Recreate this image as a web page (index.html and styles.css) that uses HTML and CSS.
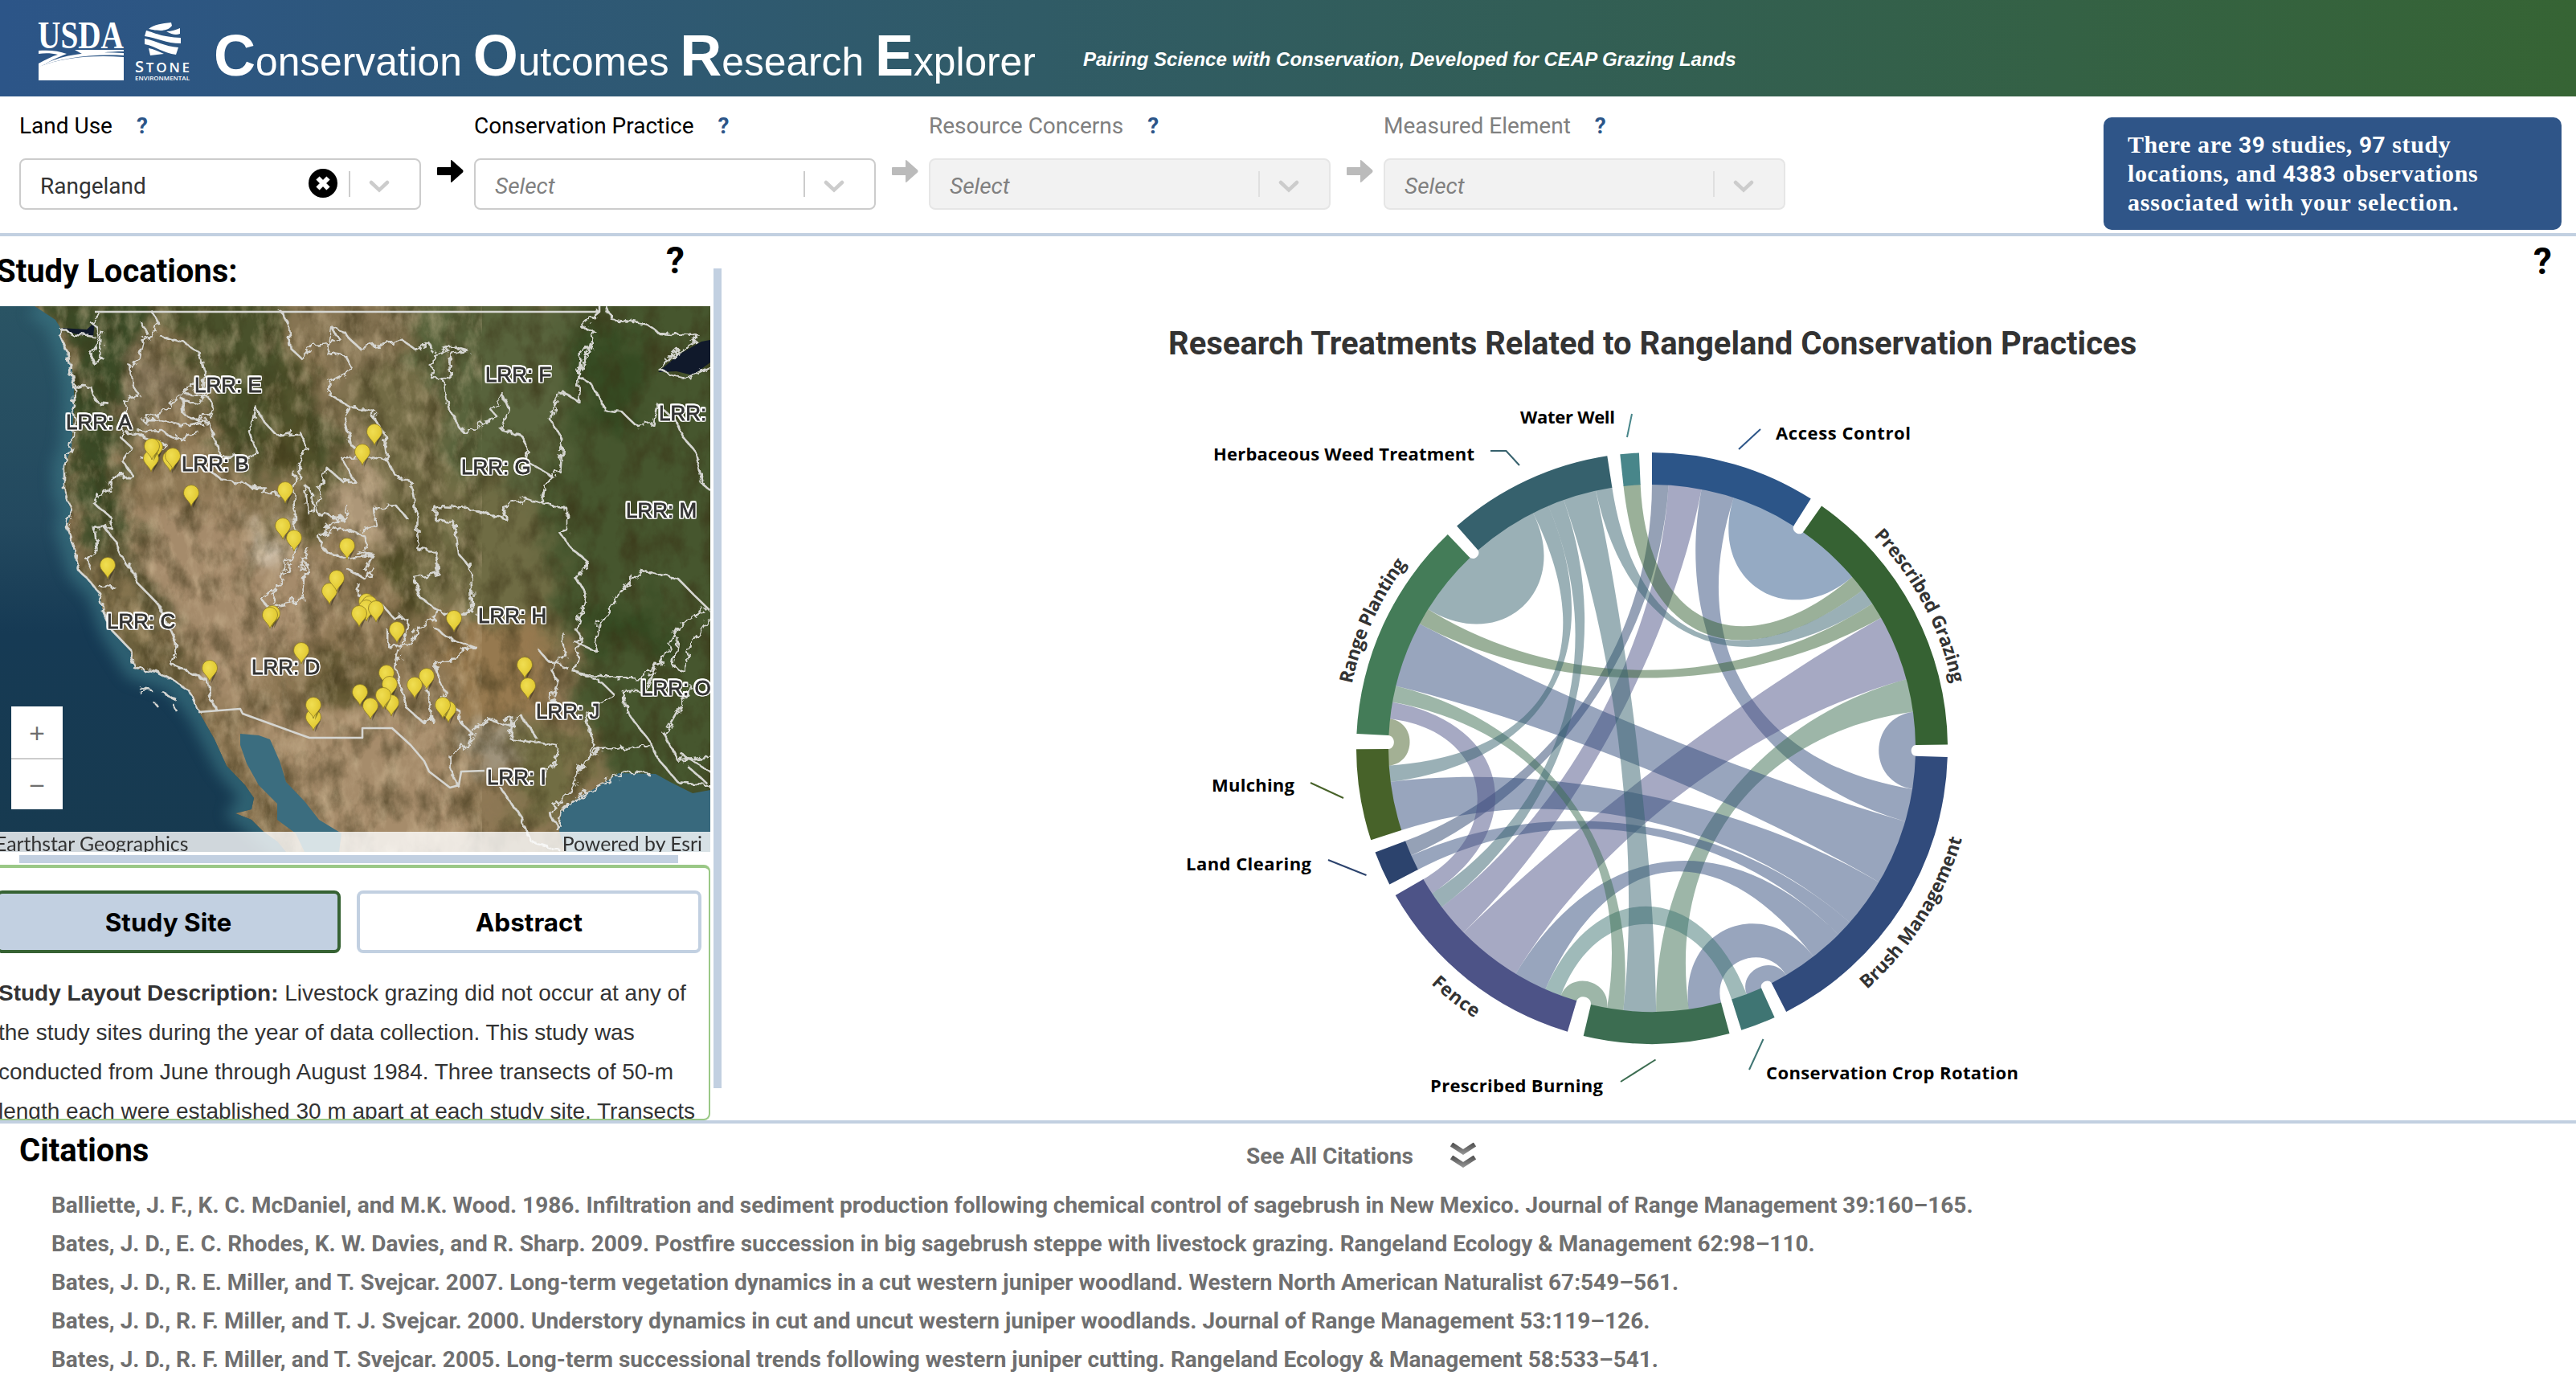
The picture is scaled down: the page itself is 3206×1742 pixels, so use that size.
FILE: index.html
```html
<!DOCTYPE html>
<html lang="en">
<head>
<meta charset="utf-8">
<title>Conservation Outcomes Research Explorer</title>
<link rel="stylesheet" href="styles.css">
</head>
<body>
<header class="topbar">
  <svg class="logo-usda" viewBox="0 0 108 74" width="108" height="74" aria-label="USDA">
    <text x="0" y="34" textLength="107" lengthAdjust="spacingAndGlyphs" class="usda-text">USDA</text>
    <path fill="#fff" d="M1 37C14 36 26 37 36 41C26 45 14 50 1 58V53C10 48 18 44 25 42C17 40 9 40 1 41Z"/>
    <path fill="#fff" d="M46 36H107V38C88 38 72 40 60 44C55 41 50 38 46 36ZM1 57C28 42 62 37 107 40V43C62 41 28 47 1 57Z"/>
    <path fill="#fff" d="M1 74V57C30 46 66 42 107 45V74Z"/>
  </svg>
  <svg class="logo-stone" viewBox="0 0 70 74" width="70" height="74" aria-label="Stone Environmental">
    <path fill="#fff" d="M18 10C24 5 34 3 46 2L47 6C44 10 40 11 35 12C29 12 22 11 18 10ZM40 13C47 13 52 11 57 9V16C52 18 47 17 40 13ZM15 12C26 15 34 20 58 21V28C40 28 28 21 13 19ZM13 22C28 25 38 32 55 33L52 42C36 40 28 32 13 29ZM18 34C24 35 30 38 37 41L20 43Z"/>
    <text x="1" y="64" class="stone-s" textLength="68" lengthAdjust="spacing"><tspan class="stone-cap">S</tspan>TONE</text>
    <text x="1" y="74" class="stone-env" textLength="68" lengthAdjust="spacingAndGlyphs">ENVIRONMENTAL</text>
  </svg>
  <h1 class="brand"><b>C</b>onservation <b>O</b>utcomes <b>R</b>esearch <b>E</b>xplorer</h1>
  <p class="tagline">Pairing Science with Conservation, Developed for CEAP Grazing Lands</p>
</header>

<svg class="defs" width="0" height="0">
  <symbol id="arrow" viewBox="0 0 33 28"><path d="M1 9H17V1Q17-1 19 1L32 12.500Q33 14 32 15.500L19 27Q17 29 17 27V19H1Q0 19 0 18V10Q0 9 1 9Z"/></symbol>
  <symbol id="chev" viewBox="0 0 26 16"><path d="M3 3L13 12.500L23 3" fill="none" stroke="#ccc" stroke-width="4.500" stroke-linecap="round"/></symbol>
</svg>

<section class="filters">
  <div class="field">
    <div class="field-label">Land Use <span class="hint">?</span></div>
    <div class="select"><span class="value">Rangeland</span>
      <svg class="clear" viewBox="0 0 36 36" width="36" height="36"><circle cx="18" cy="18" r="18"/><path d="M11.500 11.500L24.500 24.500M24.500 11.500L11.500 24.500" stroke="#fff" stroke-width="6"/></svg>
      <i class="sep"></i><svg class="chev"><use href="#chev"/></svg></div>
  </div>
  <svg class="arrow"><use href="#arrow"/></svg>
  <div class="field">
    <div class="field-label">Conservation Practice <span class="hint">?</span></div>
    <div class="select"><span class="placeholder">Select</span><i class="sep"></i><svg class="chev"><use href="#chev"/></svg></div>
  </div>
  <svg class="arrow dim"><use href="#arrow"/></svg>
  <div class="field off">
    <div class="field-label">Resource Concerns <span class="hint">?</span></div>
    <div class="select"><span class="placeholder">Select</span><i class="sep"></i><svg class="chev"><use href="#chev"/></svg></div>
  </div>
  <svg class="arrow dim"><use href="#arrow"/></svg>
  <div class="field off">
    <div class="field-label">Measured Element <span class="hint">?</span></div>
    <div class="select"><span class="placeholder">Select</span><i class="sep"></i><svg class="chev"><use href="#chev"/></svg></div>
  </div>
  <p class="summary">There are <b>39</b> studies, <b>97</b> study<br>locations, and <b>4383</b> observations<br><span class="last">associated with your selection.</span></p>
</section>

<main class="workspace">
  <aside class="side">
    <div class="side-head"><h2>Study Locations:</h2><span class="help">?</span></div>
    <div class="map">
      <svg class="map-canvas" viewBox="0 0 884 679" width="884" height="679">
        <defs>
          <linearGradient id="sea" x1="0" y1="0" x2="0" y2="1"><stop offset="0" stop-color="#2a5464"/><stop offset=".4" stop-color="#23495f"/><stop offset=".6" stop-color="#163a54"/><stop offset="1" stop-color="#173a50"/></linearGradient>
          <filter id="soft" x="-30%" y="-30%" width="160%" height="160%" color-interpolation-filters="sRGB"><feGaussianBlur stdDeviation="12" result="b"/><feTurbulence type="fractalNoise" baseFrequency=".02" numOctaves="4" seed="3"/><feDisplacementMap in="b" scale="70" xChannelSelector="R" yChannelSelector="G"/></filter>
          <filter id="shelf" x="-30%" y="-30%" width="160%" height="160%" color-interpolation-filters="sRGB"><feGaussianBlur stdDeviation="9"/></filter>
          <filter id="grain" x="0" y="0" width="100%" height="100%" color-interpolation-filters="sRGB"><feTurbulence type="fractalNoise" baseFrequency=".04 .025" numOctaves="6" seed="8"/><feColorMatrix values="0 0 0 0 .22  0 0 0 0 .19  0 0 0 0 .08  2 0 0 0 -.82"/></filter>
          <filter id="grain2" x="0" y="0" width="100%" height="100%" color-interpolation-filters="sRGB"><feTurbulence type="fractalNoise" baseFrequency=".06 .03" numOctaves="6" seed="21"/><feColorMatrix values="0 0 0 0 .86  0 0 0 0 .78  0 0 0 0 .64  2.200 0 0 0 -.95"/></filter>
          <filter id="jag" x="-5%" y="-5%" width="110%" height="110%"><feTurbulence type="fractalNoise" baseFrequency=".09" numOctaves="3" seed="4"/><feDisplacementMap in="SourceGraphic" scale="13"/></filter>
          <radialGradient id="pinfill" cx=".4" cy=".35"><stop offset="0" stop-color="#f0de52"/><stop offset="1" stop-color="#e3cb35"/></radialGradient>
          <symbol id="pin" viewBox="-12 -12 26 32" overflow="visible"><path d="M2 17L9 3L5-6Z" fill="#000" opacity=".35"/><path d="M0 15C-2 8-9.500 5-9.500-2A9.500 9.500 0 0 1 9.500-2C9.500 5 2 8 0 15Z" fill="url(#pinfill)" stroke="#8b7a25" stroke-width=".8"/></symbol>
        </defs>
        <rect width="884" height="679" fill="#8e7855"/>
        <g filter="url(#soft)">
          <path fill="#3a4a26" d="M40 -20H190L175 90L155 110L148 190L150 290L130 330L110 300L85 200L90 60Z"/>
          <path fill="#49512b" d="M190 -20H345L365 80L410 130L420 170L395 290L370 250L350 180L320 230L275 190L262 130L250 60L215 40Z"/>
          <path fill="#86765a" d="M175 60L225 50L250 80L240 130L170 150L155 120Z"/>
          <path fill="#857453" d="M355 -20H500L500 120L440 170L400 100Z"/>
          <path fill="#726b45" d="M430 90L560 60L580 300L540 400L500 330L470 200Z"/>
          <path fill="#58633c" d="M490 -20H730L720 120L690 300L700 380L600 320L560 180Z"/>
          <path fill="#6f6c44" d="M560 200L680 240L720 400L640 430L560 380Z"/>
          <path fill="#46562e" d="M715 -40H944V719L760 600L715 440L680 300L700 140Z"/>
          <path fill="#354a22" d="M730 370H830V430H740ZM720 40H800V150H730Z"/>
          <path fill="#535029" d="M460 250L520 240L530 330L515 400L480 370ZM355 60L390 190L400 280L370 300L340 180Z"/>
          <path fill="#5f5530" d="M400 450L470 450L480 480L420 490ZM280 350L310 360L300 400ZM375 470L400 440L440 470L440 500Z"/>
          <path fill="#a58b6b" d="M150 250H310L400 310L420 400L330 430L290 520L240 430L200 400Z"/>
          <path fill="#ddd2c0" d="M318 255L348 260L352 330L325 320Z"/>
          <path fill="#ad9778" d="M425 150L465 170L480 240L500 300L450 290L400 290L410 230L440 220Z"/>
          <path fill="#a68c6b" d="M300 500L560 500L600 719H420Z"/>
          <path fill="#96794f" d="M540 390H680V500L580 530Z"/>
          <path fill="#716d43" d="M640 520H730V600L700 640L640 640Z"/>
          <path fill="#a0957f" d="M580 520L650 530L630 580L580 570Z"/>
          <path fill="#4f4a29" d="M88 310L120 320L180 430L240 460L250 480L190 460L150 420Z"/>
          <path fill="#9a855c" d="M118 340L150 350L210 440L190 440Z"/>
          <path fill="#4b4a2a" d="M135 310L160 300L220 400L215 420L180 380Z"/>
        </g>
        <rect width="884" height="679" filter="url(#grain)" opacity=".62"/>
        <rect width="600" height="679" filter="url(#grain2)" opacity=".42"/>
        <g class="water">
          <path id="pacific" fill="url(#sea)" d="M-5 0H43L69 17L75 27L75 37L83 56L89 76L92 96V122L89 176L80 199V229L89 256L83 276L92 299L98 329L109 339L123 356L128 379L138 402L161 426L168 451L196 456L216 466L236 479L247 504L267 539L282 572L305 596L316 612L313 626L293 631L313 639L328 654L345 666L356 679H-5Z"/>
          <path fill="#3b6d7f" d="M299 532L322 534L336 539L348 566L356 592L379 616L397 639L425 656L422 679H379L368 656L345 639V619L322 596L307 569L299 546Z"/>
          <path fill="#38697d" d="M884 602L862 606L834 592L816 582L770 581L747 596L713 616L698 629L696 654L704 679H884Z"/>
          <path fill="#10192b" d="M884 42L873 44L845 60L819 82L842 81L862 86L884 70ZM75 27L108 29L118 20L116 38L92 34Z"/>
        </g>
        <clipPath id="seaclip"><use href="#pacific"/></clipPath>
        <g clip-path="url(#seaclip)"><path filter="url(#shelf)" fill="none" stroke="#3d7885" stroke-width="28" opacity=".65" d="M43 0L69 17L83 56L92 96V122L89 176L80 199V229L89 256L83 276L98 329L123 356L138 402L168 451L216 466L247 504L282 572L316 612L300 631L328 654L356 679"/></g>
        <g class="lines" filter="url(#jag)">
          <path d="M75 27V37L83 56L92 96V122L89 176L80 199V229L89 256L83 276L92 299L98 329L109 339L123 356L128 379L138 402L161 426L168 451L196 456L216 466L236 479L247 504M172 474L188 478L174 481M191 492L196 498M205 483L220 490M215 495L219 503"/>
          <g transform="translate(0 -91) scale(.574 .3333)">
            <path d="M1315 273L1325 320 1400 340 1430 375 1515 385 1510 400 1470 440 1430 510 1450 525 1490 540 1540 500"/>
            <path d="M330 293L345 340 330 385 310 400 300 470 285 500 285 560 300 600 270 640 270 690 260 760 285 800 265 850 290 910 240 910 235 960 215 975 205 1010 240 1060 240 1095 205 1100 210 1180 190 1220 200 1260"/>
            <path d="M305 330L320 380M345 380L400 410 435 450 445 520 440 600M215 300L195 330 210 350 215 400 195 450 205 490 220 470 220 400 225 370M130 355L150 372 205 385M160 570L200 580 210 630 235 635"/>
            <path d="M420 560L380 620 350 670 310 700 350 700 400 720 450 700 460 740 475 830 530 840 560 825 550 790 540 740 550 700 555 650 570 700 600 755 650 745 670 810 650 830 650 920"/>
            <path d="M400 600L450 610 465 660 430 700 400 680 395 620 430 640 450 590M270 740L310 760 360 790 330 860 300 830M300 740L350 735 380 770 430 740"/>
            <path d="M450 880L480 920 530 930 545 950 575 950 570 970 610 975M660 940L665 1040 680 1035 675 960 660 940M638 890L640 1190 620 1230 610 1260"/>
            <path d="M610 293L625 340 630 430 655 470 680 420 715 415 720 350 745 365 755 390 780 430 850 410 870 395 900 435 930 410 940 440M720 350L735 395 715 415 710 450 750 460 765 510 715 555 715 605 760 650 810 660 810 690 830 740 840 850 790 830 740 840 770 930 745 930 705 870 685 1030 690 1050 745 1070 755 1020M760 650L745 690 760 790 790 830"/>
            <path d="M840 850L860 910 890 925 905 1060 905 1180 945 1190 950 1260M960 440L940 450 935 540 975 545 975 450 1015 440 985 425 960 440"/>
            <path d="M960 545L970 640 985 690 1005 745 1050 705 1080 690 1065 660 1085 625 1090 600 1105 660 1085 730 1130 755 1145 800 1140 850 1190 900 1180 960 1175 1010"/>
            <path d="M1300 293L1260 350 1290 370 1280 430 1260 440 1255 540 1280 560 1295 600 1310 660 1350 670 1380 720 1415 715 1425 640 1465 700 1480 760 1510 820 1525 940 1540 960"/>
            <path d="M1280 430L1255 520 1255 630 1220 590 1200 650 1195 700 1220 780 1215 890 1190 905M945 1075L945 1020 1010 1025 1100 1070 1090 1020 1140 990 1175 1010 1230 1030 1230 1110 1215 1120 1240 1180 1270 1220 1275 1260M945 1075L985 1080 995 1200 1025 1260"/>
            <path d="M690 1130L740 1100 790 1130 800 1170 770 1190 810 1200 750 1220 700 1180 690 1130M885 1070L860 1020 810 1030 815 1090 780 1110M225 1095L250 1150 270 1230 285 1260M745 1060L720 1080 700 1120M670 1180L650 1260M810 1200L790 1260"/>
          </g>
          <g transform="translate(0 319) scale(.574 .3333)">
            <path d="M280 0L300 80 340 150 370 250 385 310 370 380 420 415 450 440 460 520 470 550M215 90L250 95M630 0L610 70 570 140 580 165 655 140 665 0M600 80L590 150"/>
            <path d="M750 20L790 60 810 20M780 80L775 120 830 160 855 210 880 205 885 260 870 310 860 380 865 440 880 540 920 600 935 590 930 500 920 450M840 250L840 310 885 310 910 240 955 185 910 130 900 60 950 40 945 0M1020 0L1025 180 1000 195 955 185"/>
            <path d="M940 240L970 280 1035 320 1000 320 995 360 945 370 945 400 965 480 960 510 1000 560 1000 600 1025 640 1020 670 975 720 975 760 990 830M1025 630L1060 585 1110 610 1130 570 1165 660M1085 580L1110 575 1110 610 1105 655 1210 685 1200 760 1175 800M1085 840L1130 950 1150 1040 1215 1075"/>
            <path d="M1275 0L1250 60 1270 120 1250 250 1260 280 1245 410 1310 430 1390 430 1430 380 1470 250 1530 170M1220 260L1225 350 1195 400 1210 440 1195 520M1170 330L1190 370 1230 390M1240 290L1290 330 1300 230 1340 120 1390 30 1470 60 1510 130 1540 180M1540 200L1500 300 1480 400 1460 390 1470 280"/>
            <path d="M1425 380L1400 480 1350 480 1360 560 1410 670 1430 740 1470 820 1540 830M1245 410L1300 440 1330 490 1300 540 1270 580 1290 690 1265 740 1300 700 1410 685M1500 460L1440 640 1470 740 1540 725M1480 720L1540 780M1490 760L1530 820M1410 790L1350 780 1300 830 1240 890 1215 930 1210 1005M1265 740L1240 850 1190 930 1210 990"/>
          </g>
        </g>
        <g class="lines">
          <path d="M118 7H746V0"/>
          <path d="M247 505L299 501L302 507L385 537H451V525H488L511 546L528 566L534 579L560 599L571 596L574 579L603 578"/>
        </g>
        <g class="lrr">
          <text x="242" y="107">LRR: E</text><text x="82" y="153">LRR: A</text><text x="226" y="205">LRR: B</text><text x="604" y="94">LRR: F</text><text x="574" y="209">LRR: G</text><text x="779" y="263">LRR: M</text><text x="820" y="142">LRR:</text><text x="133" y="401">LRR: C</text><text x="313" y="458">LRR: D</text><text x="595" y="394">LRR: H</text><text x="667" y="513">LRR: J</text><text x="798" y="484">LRR: O</text><text x="606" y="595">LRR: I</text>
        </g>
        <g id="pins"></g>
      </svg>
      <div class="zoomer"><button>+</button><button>−</button></div>
      <div class="credit"><span>Earthstar Geographics</span><span>Powered by Esri</span></div>
    </div>
    <div class="h-handle"></div>
    <div class="detail">
      <div class="tabs"><button class="tab active">Study Site</button><button class="tab">Abstract</button></div>
      <p class="desc"><b>Study Layout Description:</b> Livestock grazing did not occur at any of<br>the study sites during the year of data collection. This study was<br>conducted from June through August 1984. Three transects of 50-m<br>length each were established 30 m apart at each study site. Transects</p>
    </div>
  </aside>
  <div class="v-handle"></div>
  <section class="chart">
    <span class="help">?</span>
    <h2 class="chart-title">Research Treatments Related to Rangeland Conservation Practices</h2>
    <svg id="wheel" viewBox="1400 460 1200 934" width="1200" height="934"></svg>
  </section>
</main>

<section class="citations">
  <div class="cite-head">
    <h2>Citations</h2>
    <div class="see-all"><span>See All Citations</span>
      <svg viewBox="0 0 34 36" width="34" height="36"><defs><linearGradient id="fade" gradientUnits="userSpaceOnUse" x1="0" y1="2" x2="0" y2="18" spreadMethod="repeat"><stop offset="0" stop-color="#4c4c4c"/><stop offset="1" stop-color="#a0a0a0"/></linearGradient></defs><path d="M2.500 4L17 13.500L31.500 4M2.500 20L17 29.500L31.500 20" fill="none" stroke="url(#fade)" stroke-width="6"/></svg></div>
  </div>
  <ul>
    <li>Balliette, J. F., K. C. McDaniel, and M.K. Wood. 1986. Infiltration and sediment production following chemical control of sagebrush in New Mexico. Journal of Range Management 39:160–165.</li>
    <li>Bates, J. D., E. C. Rhodes, K. W. Davies, and R. Sharp. 2009. Postfire succession in big sagebrush steppe with livestock grazing. Rangeland Ecology &amp; Management 62:98–110.</li>
    <li>Bates, J. D., R. E. Miller, and T. Svejcar. 2007. Long-term vegetation dynamics in a cut western juniper woodland. Western North American Naturalist 67:549–561.</li>
    <li>Bates, J. D., R. F. Miller, and T. J. Svejcar. 2000. Understory dynamics in cut and uncut western juniper woodlands. Journal of Range Management 53:119–126.</li>
    <li>Bates, J. D., R. F. Miller, and T. Svejcar. 2005. Long-term successional trends following western juniper cutting. Rangeland Ecology &amp; Management 58:533–541.</li>
  </ul>
</section>
<script src="wheel.js"></script>
</body>
</html>
```
FILE: styles.css
```css
* { box-sizing: border-box; }
body { margin: 0; width: 3206px; height: 1742px; overflow: hidden; background: #fff; color: #000; font-family: Roboto, "Liberation Sans", sans-serif; }
h1, h2, p, ul { margin: 0; padding: 0; }
button { font: inherit; padding: 0; }
.defs { position: absolute; }

.topbar { height: 120px; display: flex; align-items: flex-start; padding-left: 47px; background: linear-gradient(90deg, #2c5588, #366434); color: #fff; font-family: "Liberation Sans", Arial, sans-serif; }
.logo-usda { margin-top: 26px; flex: none; overflow: visible; }
.logo-stone { margin: 26px 0 0 12px; flex: none; overflow: visible; }
.usda-text { font: bold 49px "Liberation Serif", serif; fill: #fff; }
.stone-s { font: 600 17px "Open Sans", sans-serif; fill: #fff; }
.stone-cap { font-size: 20px; }
.stone-env { font: 600 7.5px "Open Sans", sans-serif; fill: #fff; }
.brand { width: 1081px; margin: 27px 0 0 29px; font-size: 49.7px; font-weight: 400; line-height: 84px; white-space: nowrap; }
.brand b { font-size: 72px; line-height: 84px; }
.tagline { margin: 58px 0 0 1px; font-size: 24px; line-height: 32px; font-weight: 700; font-style: italic; white-space: nowrap; }

.filters { height: 174px; display: flex; align-items: flex-start; padding-left: 24px; border-bottom: 4px solid #c2d0e1; }
.field { width: 500px; flex: none; padding-top: 20px; }
.field-label { height: 57px; line-height: 34px; font-size: 28px; white-space: nowrap; }
.hint { margin-left: 23px; color: #2c5588; font-weight: 700; font-size: 28px; }
.off .field-label { color: #808080; }
.select { height: 64px; display: flex; align-items: center; border: 2px solid #ccc; border-radius: 8px; padding: 0 37px 0 24px; font-size: 28px; color: #333; }
.value, .placeholder { padding-top: 4px; }
.off .select { background: #f2f2f2; border-color: #e6e6e6; }
.placeholder { font-style: italic; color: #808080; }
.clear { margin-left: auto; margin-bottom: 2px; }
.sep { width: 2px; height: 32px; background: #ccc; margin-left: auto; }
.clear + .sep { margin-left: 14px; }
.off .sep { background: #e0e0e0; }
.chev { width: 26px; height: 16px; margin-left: 23px; margin-top: 5px; }
.arrow { width: 33px; height: 28px; margin: 79px 13px 0 20px; flex: none; }
.arrow.dim { fill: #bbb; }
.summary { margin: 26px 18px 0 auto; width: 570px; height: 140px; border-radius: 10px; background: #2f5588; color: #fff; padding: 16px 30px; font: 700 30px/36px "Liberation Serif", serif; letter-spacing: .58px; white-space: nowrap; }
.summary b { font: 700 28px/30px Roboto, sans-serif; }
.summary .last { letter-spacing: .85px; }

.workspace { height: 1100px; display: flex; }
.side { width: 884px; flex: none; display: flex; flex-direction: column; }
.side-head { height: 87px; display: flex; justify-content: space-between; }
.side-head h2 { margin: 21px 0 0 -5px; font-size: 40px; line-height: 46px; }
.help { font-size: 46px; font-weight: 700; line-height: 54px; }
.side-head .help { margin-right: 32px; margin-top: 3px; }
.map { height: 679px; position: relative; overflow: hidden; }
.map-canvas { display: block; }
.lines path { fill: none; stroke: #d6d6d2; stroke-width: 2.6; vector-effect: non-scaling-stroke; stroke-linejoin: round; }
.lrr text { font: 26px "Liberation Sans", sans-serif; fill: #333; stroke: #333; stroke-width: .8px; filter: drop-shadow(1.5px 0 0 #fff) drop-shadow(-1.5px 0 0 #fff) drop-shadow(0 1.5px 0 #fff) drop-shadow(0 -1.5px 0 #fff); }
.zoomer { position: absolute; left: 14px; top: 498px; width: 64px; display: flex; flex-direction: column; }
.zoomer button { height: 64px; border: 0; background: #fff; color: #6e6e6e; font: 35px "Open Sans", sans-serif; }
.zoomer button + button { border-top: 2px solid #ccc; }
.credit { position: absolute; left: 0; right: 0; bottom: 0; height: 25px; display: flex; justify-content: space-between; padding: 0 10px 0 0; background: rgba(255,255,255,.8); color: #323232; font: 24.8px/30px Lato, sans-serif; overflow: hidden; white-space: nowrap; }
.credit span:first-child { margin-left: -6px; }
.h-handle { width: 820px; height: 10px; margin: 4px 0 2px 24px; background: #c2d0e1; flex: none; }
.detail { height: 318px; margin-left: -20px; border: 2px solid #9ac886; border-top-width: 4px; border-radius: 8px; overflow: hidden; padding: 28px 9px 0 0; }
.tabs { display: flex; gap: 20px; justify-content: flex-end; }
.tab { width: 429px; height: 78px; flex: none; border: 4px solid #c2d0e1; border-radius: 8px; background: #fff; color: #000; font: 700 31.5px Inter, Roboto, sans-serif; }
.tab.active { background: #c2d0e1; border-color: #366233; }
.desc { margin: 25px 0 0 16px; color: #333; font: 28px/49px "Liberation Sans", sans-serif; white-space: nowrap; }
.v-handle { width: 10px; height: 1020px; margin: 40px 0 0 4px; background: #c2d0e1; flex: none; }
.chart { flex: 1; display: flex; flex-direction: column; }
.chart .help { align-self: flex-end; margin: 4px 30px 0 0; }
.chart-title { margin: 53px 0 0 556px; color: #333; font-size: 40px; line-height: 46px; white-space: nowrap; }
#wheel { margin: 9px 0 0 502px; flex: none; }
#wheel .lbl { font: 700 22px "Open Sans", "DejaVu Sans", sans-serif; fill: #000; }
#wheel .arc-lbl { font: 700 23px "Open Sans", "DejaVu Sans", sans-serif; fill: #333; }

.citations { height: 348px; border-top: 4px solid #c2d0e1; }
.cite-head { height: 78px; display: flex; }
.cite-head h2 { margin: 11px 0 0 24px; width: 1527px; font-size: 40px; line-height: 46px; }
.see-all { display: flex; align-items: center; gap: 45px; height: 42px; margin-top: 19px; font-size: 28px; font-weight: 700; color: #707070; }
.citations ul { list-style: none; padding-left: 64px; font-size: 28px; line-height: 48px; font-weight: 700; color: #707070; white-space: nowrap; }
```
FILE: wheel.js
```js
const NS = 'http://www.w3.org/2000/svg';
const add = (parent, tag, attrs, text) => {
  const el = document.createElementNS(NS, tag);
  for (const k in attrs) el.setAttribute(k, attrs[k]);
  if (text) el.textContent = text;
  parent.appendChild(el);
  return el;
};

// Study sites on the map
const sites = [[466,157],[451,182],[193,176],[188,190],[189,175],[212,190],[215,187],[238,233],[355,229],[352,274],[366,289],[432,299],[134,323],
  [410,355],[419,339],[456,368],[460,371],[456,376],[447,383],[468,377],[494,403],[339,383],[336,385],[565,389],[375,429],[261,451],[481,457],[485,471],
  [531,461],[516,472],[448,481],[487,494],[477,485],[461,498],[390,512],[390,497],[558,502],[551,497],[653,447],[657,473]];
const pins = document.getElementById('pins');
sites.forEach(([x, y]) => add(pins, 'use', { href: '#pin', x: x - 12, y: y - 11, width: 26, height: 32 }));

// Dependency wheel
const svg = document.getElementById('wheel');
const CX = 2056, CY = 931, R = 368, RI = 328, RL = 329;
const nodes = [
  ['Access Control', '#2c5588', 0, 32.5],
  ['Prescribed Grazing', '#366233', 35, 89.3],
  ['Brush Management', '#314b7c', 91.7, 153],
  ['Conservation Crop Rotation', '#3f7573', 155.5, 162.4],
  ['Prescribed Burning', '#3c6d51', 164.8, 193.4],
  ['Fence', '#4d5387', 196.6, 240.2],
  ['Land Clearing', '#2c436d', 242.6, 249.4],
  ['Mulching', '#476229', 251.9, 269.8],
  ['Range Planting', '#447c58', 272.8, 316.3],
  ['Herbaceous Weed Treatment', '#36616d', 318.7, 351.3],
  ['Water Well', '#48868a', 353.8, 357.5]
];
// [node, node, weight, node that gives the colour]
const links = [[0,6,1,6],[0,5,2,5],[0,2,2,2],[0,1,4,0],[1,10,1,1],[1,9,1,9],[1,8,1,1],[1,5,4,5],[1,4,2,4],[1,2,2,2],
  [2,8,4,2],[2,7,3,2],[2,6,1,2],[2,5,2,2],[2,4,2,2],[2,3,1,2],[3,5,1,3],[4,9,2,9],[4,8,1,4],[4,5,1,4],
  [5,9,1,9],[5,8,1,5],[7,9,1,9],[7,8,1,7],[8,9,4,9]];
const at = (deg, r) => {
  const a = deg * Math.PI / 180;
  return [CX + r * Math.sin(a), CY - r * Math.cos(a)];
};
const s = p => p.map(v => v.toFixed(1)).join(' ');
const n = nodes.length;
const span = links.map(() => ({}));
nodes.forEach((node, i) => {
  const own = links.map((l, k) => ({ l, k })).filter(o => o.l[0] === i || o.l[1] === i)
    .map(o => ({ ...o, d: (i - (o.l[0] === i ? o.l[1] : o.l[0]) + n) % n })).sort((a, b) => a.d - b.d);
  const unit = (node[3] - node[2]) / own.reduce((t, o) => t + o.l[2], 0);
  let a = node[2];
  own.forEach(o => { span[o.k][i] = [a, a += unit * o.l[2]]; });
});
const curve = (from, to) => {
  let d = Math.abs(from - to) % 360;
  if (d > 180) d = 360 - d;
  const k = 0.6 * Math.min(1, d * Math.PI / 180);
  return `C${s(at(from, RL * (1 - k)))} ${s(at(to, RL * (1 - k)))} ${s(at(to, RL))}`;
};
links.forEach((l, k) => {
  const [a0, a1] = span[k][l[0]], [b0, b1] = span[k][l[1]];
  add(svg, 'path', { fill: nodes[l[3]][1], 'fill-opacity': 0.5,
    d: `M${s(at(a0, RL))}A${RL} ${RL} 0 0 1 ${s(at(a1, RL))}${curve(a1, b0)}A${RL} ${RL} 0 0 1 ${s(at(b1, RL))}${curve(b1, a0)}Z` });
});
nodes.forEach(([, color, a, b]) => add(svg, 'path', { fill: color,
  d: `M${s(at(a, R))}A${R} ${R} 0 0 1 ${s(at(b, R))}L${s(at(b, RI))}A${RI} ${RI} 0 0 0 ${s(at(a, RI))}Z` }));

// Straight labels: text, x, baseline, length, leader line, node
[['Access Control', 2210, 547, 168, 'M2164 559L2191 534', 0],
 ['Water Well', 1892, 527, 118, 'M2025 544L2031 515', 10],
 ['Herbaceous Weed Treatment', 1510, 573, 325, 'M1855 561H1874.500L1891 579', 9],
 ['Mulching', 1508, 985, 103, 'M1631 974L1672 993', 7],
 ['Land Clearing', 1476, 1083, 156, 'M1653 1070L1700.500 1089', 6],
 ['Prescribed Burning', 1780, 1359, 215, 'M2017 1346L2060.500 1318.500', 4],
 ['Conservation Crop Rotation', 2198, 1343, 314, 'M2194.500 1293L2177 1331', 3]
].forEach(([t, x, y, w, d, i]) => {
  add(svg, 'path', { d, fill: 'none', stroke: nodes[i][1], 'stroke-width': 2 });
  add(svg, 'text', { class: 'lbl', x, y, textLength: w }, t);
});

// Curved labels: text, radius, start angle, end angle, sweep
[['Prescribed Grazing', 382, 46.2, 77.8, 1], ['Brush Management', 402, 138.3, 106.3, 0],
 ['Fence', 402, 223.2, 213.3, 0], ['Range Planting', 382, 282.1, 306.9, 1]
].forEach(([t, r, a, b, sweep], i) => {
  const w = Math.abs(a - b) * Math.PI / 180 * r;
  const end = b + (sweep ? 8 : -8);
  add(svg, 'path', { id: 'arc' + i, fill: 'none', d: `M${s(at(a, r))}A${r} ${r} 0 0 ${sweep} ${s(at(end, r))}` });
  const el = add(svg, 'text', { class: 'arc-lbl', textLength: w.toFixed(1) });
  add(el, 'textPath', { href: '#arc' + i, textLength: w.toFixed(1) }, t);
});
```
